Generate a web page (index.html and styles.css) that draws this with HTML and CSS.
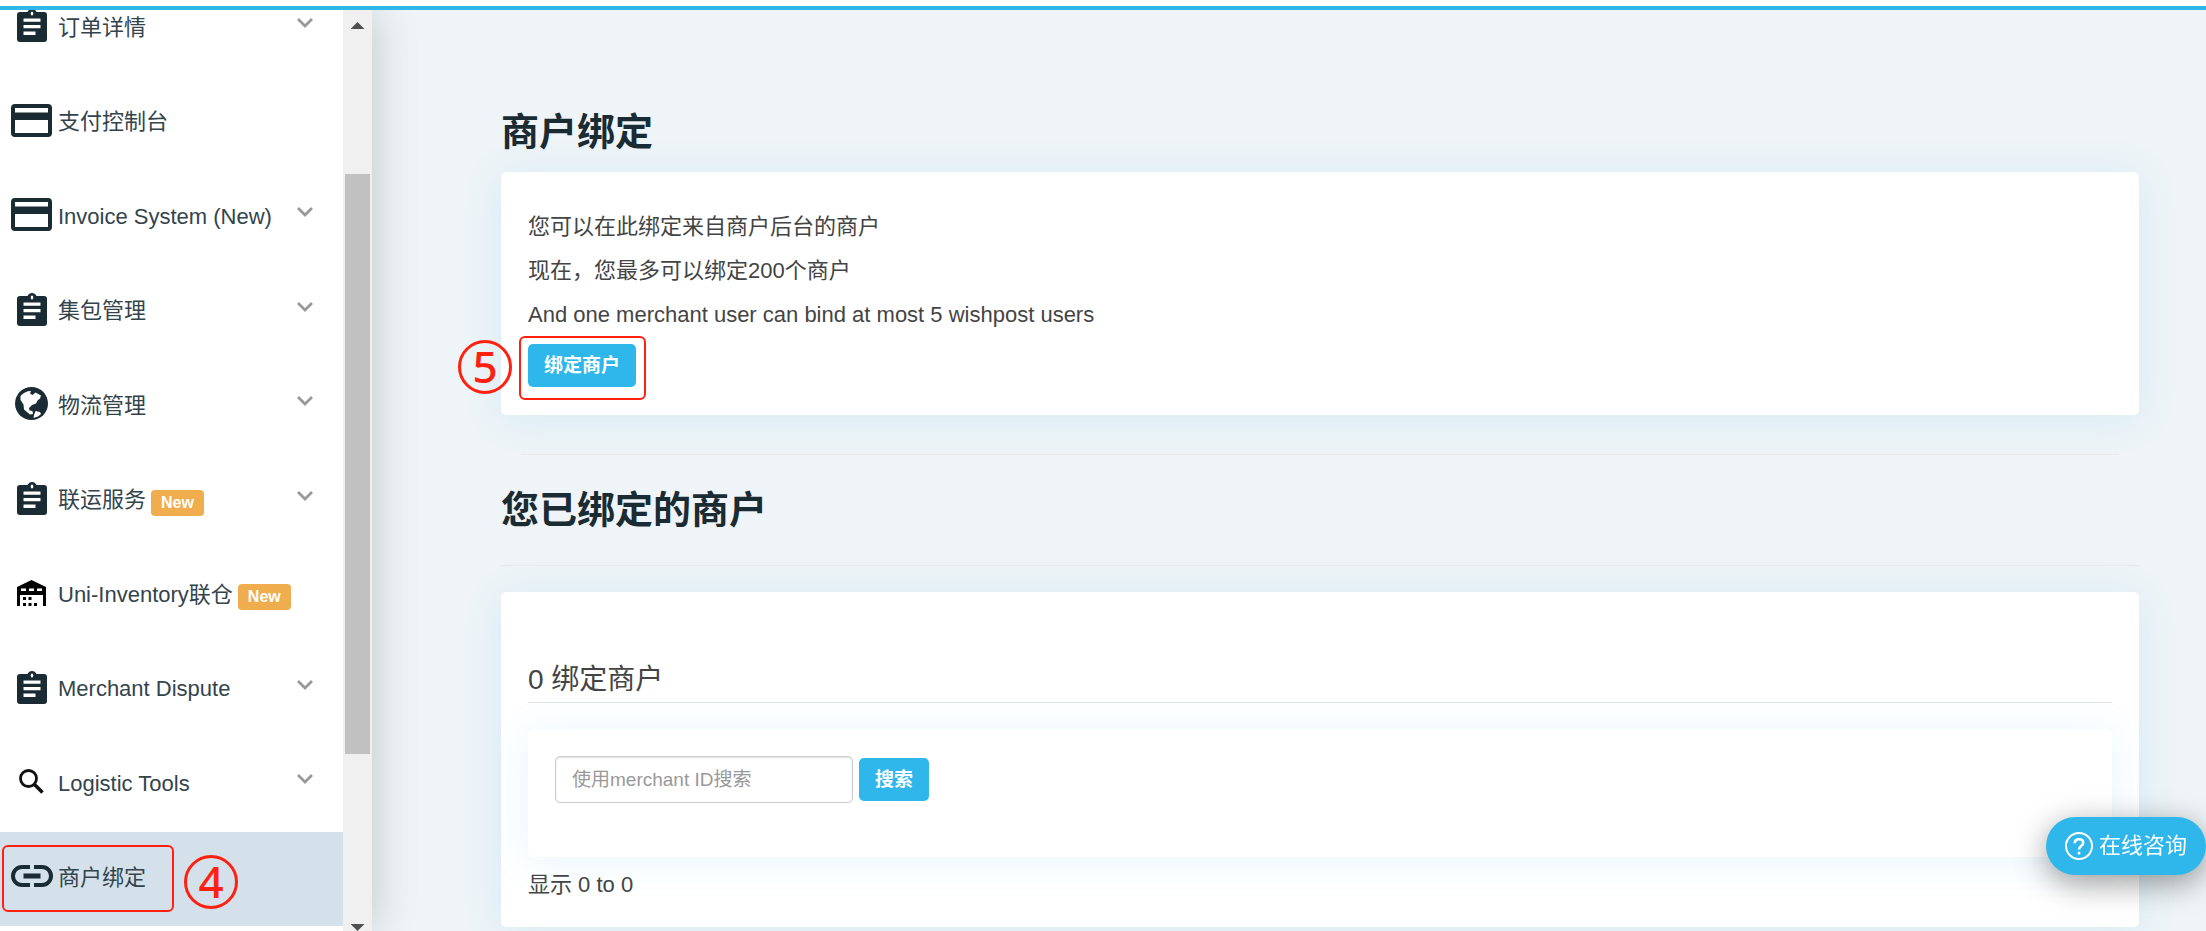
FILE: index.html
```html
<!DOCTYPE html>
<html lang="zh-CN">
<head>
<meta charset="utf-8">
<title>商户绑定</title>
<link rel="stylesheet" href="styles.css">
</head>
<body>
<svg class="sprite" aria-hidden="true">
  <symbol id="i-clip" viewBox="0 0 30 33">
    <path fill="currentColor" fill-rule="evenodd" d="M10.500 3C11.500 1 13 0 15 0s3.500 1 4.500 3H27a3 3 0 0 1 3 3V30a3 3 0 0 1-3 3H3a3 3 0 0 1-3-3V6a3 3 0 0 1 3-3zM15 2.500a1.300 2 0 0 0 0 4 1.300 2 0 0 0 0-4zM6.500 9.500v3.200h17V9.500zm0 6.500v3.200h17V16zm0 6.500v3.500h12v-3.500z"/>
  </symbol>
  <symbol id="i-card" viewBox="0 0 41 33">
    <path fill="currentColor" fill-rule="evenodd" d="M4 0h33a4 4 0 0 1 4 4v25a4 4 0 0 1-4 4H4a4 4 0 0 1-4-4V4a4 4 0 0 1 4-4zm0 4v4.500h33V4zm0 12v13h33V16z"/>
  </symbol>
  <symbol id="i-globe" viewBox="0 0 33 33">
    <circle cx="16.500" cy="16.500" r="16.500" fill="currentColor"/>
    <path fill="#fff" d="M5.500 9C8 6 11.500 4 16 4l-1 2.500 2.500 1.500 3-2.500 5.500 3-1 3-2.500 2-1.500 3-4 1.500-3 3 .5 2.500 3 .5.500 3-3 .5-6-5-.500-5L5.500 13z"/>
    <path fill="#fff" d="m20.500 24 4.500 1 1 2-3 2.500-4.500 1.500.5-3z"/>
  </symbol>
  <symbol id="i-house" viewBox="0 0 29 26">
    <path d="M14.500 0 29 7v19h-3V15H3v11H0V7z"/>
    <path fill="#fff" d="M4 8.500h5V11H4zm8 0h5V11h-5zm8 0h5V11h-5z"/>
    <path d="M6 17h3v3H6zm5.500 0h3v3h-3zM6 23h3v3H6zm5.500 0h3v3h-3zm5.500 0h3v3h-3z"/>
  </symbol>
  <symbol id="i-search" viewBox="0 0 25 25">
    <circle cx="9.500" cy="9.500" r="8" fill="none" stroke="#111" stroke-width="2.800"/>
    <path d="m15.500 15.500 8 8" stroke="#111" stroke-width="3.600"/>
  </symbol>
  <symbol id="i-link" viewBox="0 0 42 22">
    <path d="M19 2h-8a9 9 0 0 0 0 18h8M23 2h8a9 9 0 0 1 0 18h-8" fill="none" stroke="currentColor" stroke-width="4"/>
    <path d="M12.500 11h17" stroke="currentColor" stroke-width="5"/>
  </symbol>
  <symbol id="i-down" viewBox="0 0 16 10">
    <path d="m1 1 7 7 7-7" fill="none" stroke="#999" stroke-width="2.800"/>
  </symbol>
</svg>

<header class="topbar"></header>
<div class="layout">
  <aside class="sidebar">
    <nav class="menu">
      <a class="item" href="#"><span class="icon"><svg width="30" height="33"><use href="#i-clip"/></svg></span><span class="label">订单详情</span><svg class="arrow" width="16" height="10"><use href="#i-down"/></svg></a>
      <a class="item" href="#"><span class="icon"><svg width="41" height="33"><use href="#i-card"/></svg></span><span class="label">支付控制台</span></a>
      <a class="item" href="#"><span class="icon"><svg width="41" height="33"><use href="#i-card"/></svg></span><span class="label">Invoice System (New)</span><svg class="arrow" width="16" height="10"><use href="#i-down"/></svg></a>
      <a class="item" href="#"><span class="icon"><svg width="30" height="33"><use href="#i-clip"/></svg></span><span class="label">集包管理</span><svg class="arrow" width="16" height="10"><use href="#i-down"/></svg></a>
      <a class="item" href="#"><span class="icon"><svg width="33" height="33"><use href="#i-globe"/></svg></span><span class="label">物流管理</span><svg class="arrow" width="16" height="10"><use href="#i-down"/></svg></a>
      <a class="item" href="#"><span class="icon"><svg width="30" height="33"><use href="#i-clip"/></svg></span><span class="label">联运服务</span><span class="badge">New</span><svg class="arrow" width="16" height="10"><use href="#i-down"/></svg></a>
      <a class="item" href="#"><span class="icon"><svg width="29" height="26"><use href="#i-house"/></svg></span><span class="label">Uni-Inventory联仓</span><span class="badge">New</span></a>
      <a class="item" href="#"><span class="icon"><svg width="30" height="33"><use href="#i-clip"/></svg></span><span class="label">Merchant Dispute</span><svg class="arrow" width="16" height="10"><use href="#i-down"/></svg></a>
      <a class="item" href="#"><span class="icon"><svg width="25" height="25"><use href="#i-search"/></svg></span><span class="label">Logistic Tools</span><svg class="arrow" width="16" height="10"><use href="#i-down"/></svg></a>
      <a class="item active" href="#" aria-current="page"><span class="icon"><svg width="42" height="22"><use href="#i-link"/></svg></span><span class="label">商户绑定</span><span class="mark mark-menu"></span><span class="step step-menu">4</span></a>
    </nav>
    <div class="scroll" aria-hidden="true">
      <div class="scroll-up"></div>
      <div class="scroll-before"></div>
      <div class="scroll-thumb"></div>
      <div class="scroll-after"></div>
      <div class="scroll-down"></div>
    </div>
  </aside>

  <main class="main">
    <h1 class="title">商户绑定</h1>
    <section class="card intro">
      <p>您可以在此绑定来自商户后台的商户</p>
      <p>现在，您最多可以绑定200个商户</p>
      <p>And one merchant user can bind at most 5 wishpost users</p>
      <div class="bind">
        <button class="btn" type="button">绑定商户</button>
        <span class="mark mark-bind"></span>
        <span class="step step-bind">5</span>
      </div>
    </section>
    <hr class="rule inset">
    <h1 class="title second">您已绑定的商户</h1>
    <hr class="rule">
    <section class="card bound">
      <h2 class="count">0 绑定商户</h2>
      <form class="card search">
        <input class="field" type="text" placeholder="使用merchant ID搜索" aria-label="使用merchant ID搜索">
        <button class="btn" type="button">搜索</button>
      </form>
      <p class="range">显示 0 to 0</p>
    </section>
  </main>
</div>
<button class="chat" type="button">
  <svg width="28" height="28" viewBox="0 0 28 28" fill="none" stroke="#fff" stroke-width="2" aria-hidden="true"><circle cx="14" cy="14" r="13"/><path stroke-width="2.600" d="M9.800 11.200c0-2.600 1.700-4 4.200-4s4.200 1.400 4.200 3.700c0 3-4.200 3.200-4.200 6.600M14 19.800v2.800"/></svg>
  在线咨询
</button>
</body>
</html>
```
FILE: styles.css
```css
* { box-sizing: border-box; }

body {
  margin: 0;
  height: 100vh;
  display: flex;
  flex-direction: column;
  overflow: hidden;
  background: #eef4f7;
  color: #444;
  font: 22px/44px "Liberation Sans", "Noto Sans CJK SC", sans-serif;
}

.sprite { position: absolute; width: 0; height: 0; }

.topbar {
  flex: none;
  height: 10px;
  background: #fff;
  border-bottom: 4px solid #2fb7ec;
}

.layout { flex: 1; min-height: 0; display: flex; }

.sidebar {
  flex: none;
  display: flex;
  background: #fff;
  box-shadow: 0 0 44px rgba(0, 0, 0, 0.2);
  clip-path: inset(0 -80px 0 0);
}

.menu { width: 343px; margin-top: -29px; }

.item {
  position: relative;
  display: flex;
  align-items: center;
  height: 95px;
  padding: 0 30px 2px 5px;
  color: #33444d;
  text-decoration: none;
  line-height: 32px;
}
.item:nth-child(even) { height: 94px; }
.item.active { background: #d4e1ea; }

.icon {
  flex: none;
  display: flex;
  justify-content: center;
  width: 53px;
  padding-bottom: 4px;
  color: #1b2b33;
}
.arrow { margin: 0 0 9px auto; }

.badge {
  margin: 5px 0 0 5px;
  padding: 0 10px;
  border-radius: 4px;
  background: #f0ad4e;
  color: #fff;
  font-size: 16px;
  font-weight: bold;
  line-height: 26px;
}

.scroll { width: 29px; display: flex; flex-direction: column; align-items: center; background: #f0f0f0; }
.scroll-up, .scroll-down { flex: none; width: 14px; height: 7px; background: #505050; }
.scroll-up { margin: 12px 0 13px; clip-path: polygon(50% 0, 100% 100%, 0 100%); }
.scroll-down { clip-path: polygon(0 0, 100% 0, 50% 100%); }
.scroll-before { flex: 132; }
.scroll-thumb { flex: 580; width: 25px; background: #c1c1c1; }
.scroll-after { flex: 170; }

.main { flex: 1; padding: 93px 67px 0 129px; }

.title {
  margin: 0 0 11px;
  color: #1b2b33;
  font-size: 38px;
  line-height: 58px;
}

.card {
  border-radius: 5px;
  background: #fff;
  box-shadow: 0 4px 40px rgba(47, 183, 236, 0.12);
}
.card p { margin: 0; }
.intro { padding: 33px 27px 28px; }

.bind { position: relative; display: flex; margin-top: 7px; }

.btn {
  padding: 0 16px;
  border: 0;
  border-radius: 5px;
  background: #2fb7ec;
  color: #fff;
  font: bold 19px/43px "Liberation Sans", "Noto Sans CJK SC", sans-serif;
}

.rule { margin: 0; border: 0; border-top: 1px solid #eaeaea; }
.inset { margin: 39px 20px 0; }
.second { margin: 26px 0; }

.bound { margin-top: 26px; padding: 66px 27px 20px; }

.count {
  margin: 0 0 26px;
  border-bottom: 1px solid #e2e2e2;
  font-size: 28px;
  font-weight: normal;
  line-height: 44px;
}

.search { display: flex; align-items: center; gap: 6px; padding: 27px 27px 54px; }

.field {
  width: 298px;
  height: 47px;
  padding: 0 16px;
  border: 1px solid #ccc;
  border-radius: 5px;
  box-shadow: inset 0 1px 2px rgba(0, 0, 0, 0.12);
  font: 19px "Liberation Sans", "Noto Sans CJK SC", sans-serif;
}
.field::placeholder { color: #999; }

.range { padding-top: 6px; }

.mark { position: absolute; border: 2px solid #ff2010; border-radius: 6px; }
.mark-menu { left: 2px; top: 13px; width: 172px; height: 67px; }
.mark-bind { left: -9px; top: -8px; width: 127px; height: 64px; }

.step {
  position: absolute;
  width: 54px;
  height: 54px;
  border: 3px solid #ff2010;
  border-radius: 50%;
  color: #ff2010;
  font: 500 44px/46px "Noto Sans", sans-serif;
  text-align: center;
}
.step-menu { left: 184px; top: 23px; }
.step-bind { left: -70px; top: -4px; }

.chat {
  position: fixed;
  right: 0;
  bottom: 56px;
  display: flex;
  align-items: center;
  gap: 6px;
  padding: 0 19px;
  border: 0;
  border-radius: 29px;
  background: #2fb7ec;
  box-shadow: 0 8px 32px rgba(0, 0, 0, 0.4);
  color: #fff;
  font: 22px/58px "Liberation Sans", "Noto Sans CJK SC", sans-serif;
}
```
